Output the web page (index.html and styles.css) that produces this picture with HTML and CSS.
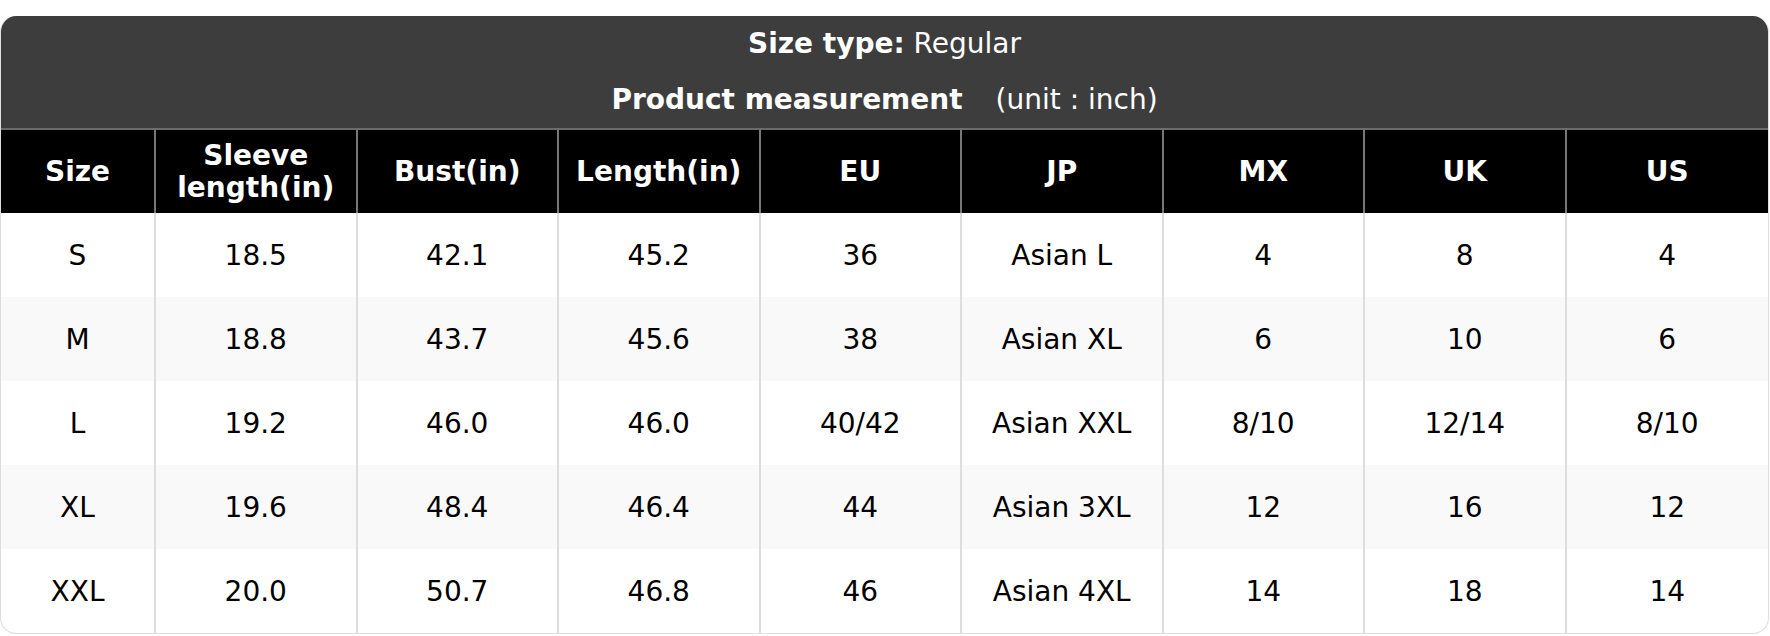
FILE: index.html
```html
<!DOCTYPE html>
<html lang="en">
<head>
<meta charset="utf-8">
<title>Size chart</title>
<link rel="stylesheet" href="styles.css">
</head>
<body>
<div class="card">
  <div class="title">
    <p class="title-line"><b>Size type:</b> Regular</p>
    <p class="title-line"><b>Product measurement</b><span class="unit">(unit : inch)</span></p>
  </div>
  <table class="chart">
    <colgroup>
      <col class="c-first">
      <col><col><col><col><col><col><col><col>
    </colgroup>
    <thead>
      <tr>
        <th>Size</th>
        <th>Sleeve<br>length(in)</th>
        <th>Bust(in)</th>
        <th>Length(in)</th>
        <th>EU</th>
        <th>JP</th>
        <th>MX</th>
        <th>UK</th>
        <th>US</th>
      </tr>
    </thead>
    <tbody>
      <tr><td>S</td><td>18.5</td><td>42.1</td><td>45.2</td><td>36</td><td>Asian L</td><td>4</td><td>8</td><td>4</td></tr>
      <tr><td>M</td><td>18.8</td><td>43.7</td><td>45.6</td><td>38</td><td>Asian XL</td><td>6</td><td>10</td><td>6</td></tr>
      <tr><td>L</td><td>19.2</td><td>46.0</td><td>46.0</td><td>40/42</td><td>Asian XXL</td><td>8/10</td><td>12/14</td><td>8/10</td></tr>
      <tr><td>XL</td><td>19.6</td><td>48.4</td><td>46.4</td><td>44</td><td>Asian 3XL</td><td>12</td><td>16</td><td>12</td></tr>
      <tr><td>XXL</td><td>20.0</td><td>50.7</td><td>46.8</td><td>46</td><td>Asian 4XL</td><td>14</td><td>18</td><td>14</td></tr>
    </tbody>
  </table>
</div>
</body>
</html>
```

FILE: styles.css
```css
html, body {
  margin: 0;
  padding: 0;
  background: #ffffff;
}

body {
  font-family: "DejaVu Sans", Verdana, sans-serif;
  font-size: 28px;
  color: #000000;
  padding-top: 16px;
}

.card {
  width: 1769px;
  box-sizing: border-box;
  border: 1px solid #dddddd;
  border-top: none;
  border-radius: 16px;
  overflow: hidden;
  background: #ffffff;
}

.title {
  background: #3d3d3d;
  color: #ffffff;
  text-align: center;
  padding: 12px 0 12px;
  display: flex;
  flex-direction: column;
  gap: 24px;
}

.title-line {
  margin: 0;
  line-height: 32px;
}

.unit {
  margin-left: 33px;
}

.chart {
  width: 100%;
  table-layout: fixed;
  border-collapse: separate;
  border-spacing: 0;
}

.c-first {
  width: 155px;
}

.chart th {
  background: #000000;
  color: #ffffff;
  font-weight: bold;
  line-height: 32px;
  padding: 10px 4px 9px;
  border-top: 2px solid #6a6a6a;
  border-right: 2px solid #777777;
  text-align: center;
  vertical-align: middle;
}

.chart td {
  line-height: 32px;
  padding: 27px 4px 25px;
  border-right: 2px solid #dddddd;
  text-align: center;
  vertical-align: middle;
}

.chart th:last-child,
.chart td:last-child {
  border-right: none;
}

.chart tbody tr:nth-child(even) td {
  background: #f9f9f9;
}
```
